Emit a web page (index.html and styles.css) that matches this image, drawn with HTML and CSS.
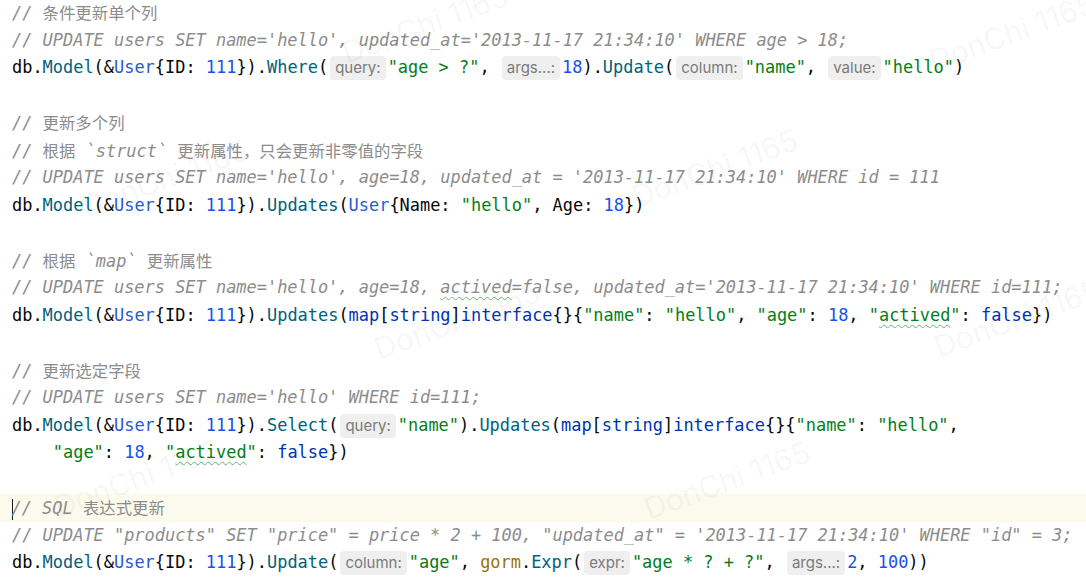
FILE: index.html
```html
<!DOCTYPE html>
<html lang="zh">
<head>
<meta charset="utf-8">
<title>GORM Update</title>
<link rel="stylesheet" href="styles.css">
</head>
<body>
<div class="editor">
  <div class="code">
<div class="line"><span class="c">// <span class="zh">条件更新单个列</span></span></div>
<div class="line"><span class="c">// UPDATE users SET name='hello', updated_at='2013-11-17 21:34:10' WHERE age &gt; 18;</span></div>
<div class="line">db.<span class="m">Model</span>(&amp;<span class="t">User</span>{ID: <span class="n">111</span>}).<span class="m">Where</span>(<span class="h">query:</span><span class="s">"age &gt; ?"</span>, <span class="h">args...:</span><span class="n">18</span>).<span class="m">Update</span>(<span class="h">column:</span><span class="s">"name"</span>, <span class="h">value:</span><span class="s">"hello"</span>)</div>
<div class="line"> </div>
<div class="line"><span class="c">// <span class="zh">更新多个列</span></span></div>
<div class="line"><span class="c">// <span class="zh">根据</span> `struct` <span class="zh">更新属性，只会更新非零值的字段</span></span></div>
<div class="line"><span class="c">// UPDATE users SET name='hello', age=18, updated_at = '2013-11-17 21:34:10' WHERE id = 111</span></div>
<div class="line">db.<span class="m">Model</span>(&amp;<span class="t">User</span>{ID: <span class="n">111</span>}).<span class="m">Updates</span>(<span class="t">User</span>{Name: <span class="s">"hello"</span>, Age: <span class="n">18</span>})</div>
<div class="line"> </div>
<div class="line"><span class="c">// <span class="zh">根据</span> `map` <span class="zh">更新属性</span></span></div>
<div class="line"><span class="c">// UPDATE users SET name='hello', age=18, <span class="w">actived</span>=false, updated_at='2013-11-17 21:34:10' WHERE id=111;</span></div>
<div class="line">db.<span class="m">Model</span>(&amp;<span class="t">User</span>{ID: <span class="n">111</span>}).<span class="m">Updates</span>(<span class="k">map</span>[<span class="k">string</span>]<span class="k">interface</span>{}{<span class="s">"name"</span>: <span class="s">"hello"</span>, <span class="s">"age"</span>: <span class="n">18</span>, <span class="s">"<span class="w">actived</span>"</span>: <span class="k">false</span>})</div>
<div class="line"> </div>
<div class="line"><span class="c">// <span class="zh">更新选定字段</span></span></div>
<div class="line"><span class="c">// UPDATE users SET name='hello' WHERE id=111;</span></div>
<div class="line">db.<span class="m">Model</span>(&amp;<span class="t">User</span>{ID: <span class="n">111</span>}).<span class="m">Select</span>(<span class="h">query:</span><span class="s">"name"</span>).<span class="m">Updates</span>(<span class="k">map</span>[<span class="k">string</span>]<span class="k">interface</span>{}{<span class="s">"name"</span>: <span class="s">"hello"</span>,</div>
<div class="line">    <span class="s">"age"</span>: <span class="n">18</span>, <span class="s">"<span class="w">actived</span>"</span>: <span class="k">false</span>})</div>
<div class="line"> </div>
<div class="line current"><span class="caret"></span><span class="c">// SQL <span class="zh">表达式更新</span></span></div>
<div class="line"><span class="c">// UPDATE "products" SET "price" = price * 2 + 100, "updated_at" = '2013-11-17 21:34:10' WHERE "id" = 3;</span></div>
<div class="line">db.<span class="m">Model</span>(&amp;<span class="t">User</span>{ID: <span class="n">111</span>}).<span class="m">Update</span>(<span class="h">column:</span><span class="s">"age"</span>, <span class="p">gorm</span>.<span class="m">Expr</span>(<span class="h">expr:</span><span class="s">"age * ? + ?"</span>, <span class="h">args...:</span><span class="n">2</span>, <span class="n">100</span>))</div>
  </div>
  <div class="marks">
    <span class="wm wm1">DonChi 1165</span>
    <span class="wm wm2">DonChi 1165</span>
    <span class="wm wm3">DonChi 1165</span>
    <span class="wm wm4">DonChi 1165</span>
    <span class="wm wm5">DonChi 1165</span>
    <span class="wm wm6">DonChi 1165</span>
    <span class="wm wm7">DonChi 1165</span>
    <span class="wm wm8">DonChi 1165</span>
  </div>
</div>
</body>
</html>
```

FILE: styles.css
```css
html, body {
  margin: 0;
  padding: 0;
  background: #ffffff;
}

.editor {
  position: relative;
  width: 1086px;
  height: 580px;
  overflow: hidden;
  background: #ffffff;
}

.code {
  display: flex;
  flex-direction: column;
  margin-top: -1px;
  font-family: "DejaVu Sans Mono", "Liberation Mono", monospace;
  font-size: 16.95px;
  color: #080808;
}

.line {
  height: 27.5px;
  line-height: 27.5px;
  padding-left: 12px;
  white-space: pre;
}

.line.current {
  background: #fcfaed;
}

.caret {
  display: inline-block;
  width: 0;
  height: 21px;
  border-left: 1.5px solid #1a1a1a;
  margin-right: -1.5px;
  vertical-align: middle;
}

.c {
  color: #8c8c8c;
  font-style: italic;
}

.zh {
  font-family: "Noto Sans CJK SC", sans-serif;
  font-style: normal;
  font-size: 16.4px;
}

.m { color: #00627a; }
.t { color: #2a5bd0; }
.n { color: #1750eb; }
.s { color: #067d17; }
.k { color: #0033b3; }
.p { color: #9a7400; }

.w {
  text-decoration: underline wavy #6cb46c;
  text-decoration-thickness: 1px;
  text-underline-offset: 3px;
}

.h {
  display: inline-block;
  height: 24px;
  line-height: 24px;
  padding: 0 5px;
  margin: 0 2px;
  border-radius: 4px;
  background: #efefef;
  color: #7a7a7a;
  font-family: Inter, "Noto Sans", sans-serif;
  font-size: 15px;
  font-style: normal;
  vertical-align: middle;
}

.marks {
  position: absolute;
  inset: 0;
  pointer-events: none;
}

.wm {
  position: absolute;
  font-family: Inter, "Noto Sans", sans-serif;
  font-size: 30px;
  color: rgba(0, 0, 0, 0.05);
  white-space: nowrap;
  transform: rotate(-20deg);
  transform-origin: center;
}

.wm1 { left: 338px; top: 6px; }
.wm2 { left: 925px; top: 14px; }
.wm3 { left: 78px; top: 160px; }
.wm4 { left: 628px; top: 150px; }
.wm5 { left: 370px; top: 302px; }
.wm6 { left: 930px; top: 300px; }
.wm7 { left: 50px; top: 460px; }
.wm8 { left: 640px; top: 462px; }
```
